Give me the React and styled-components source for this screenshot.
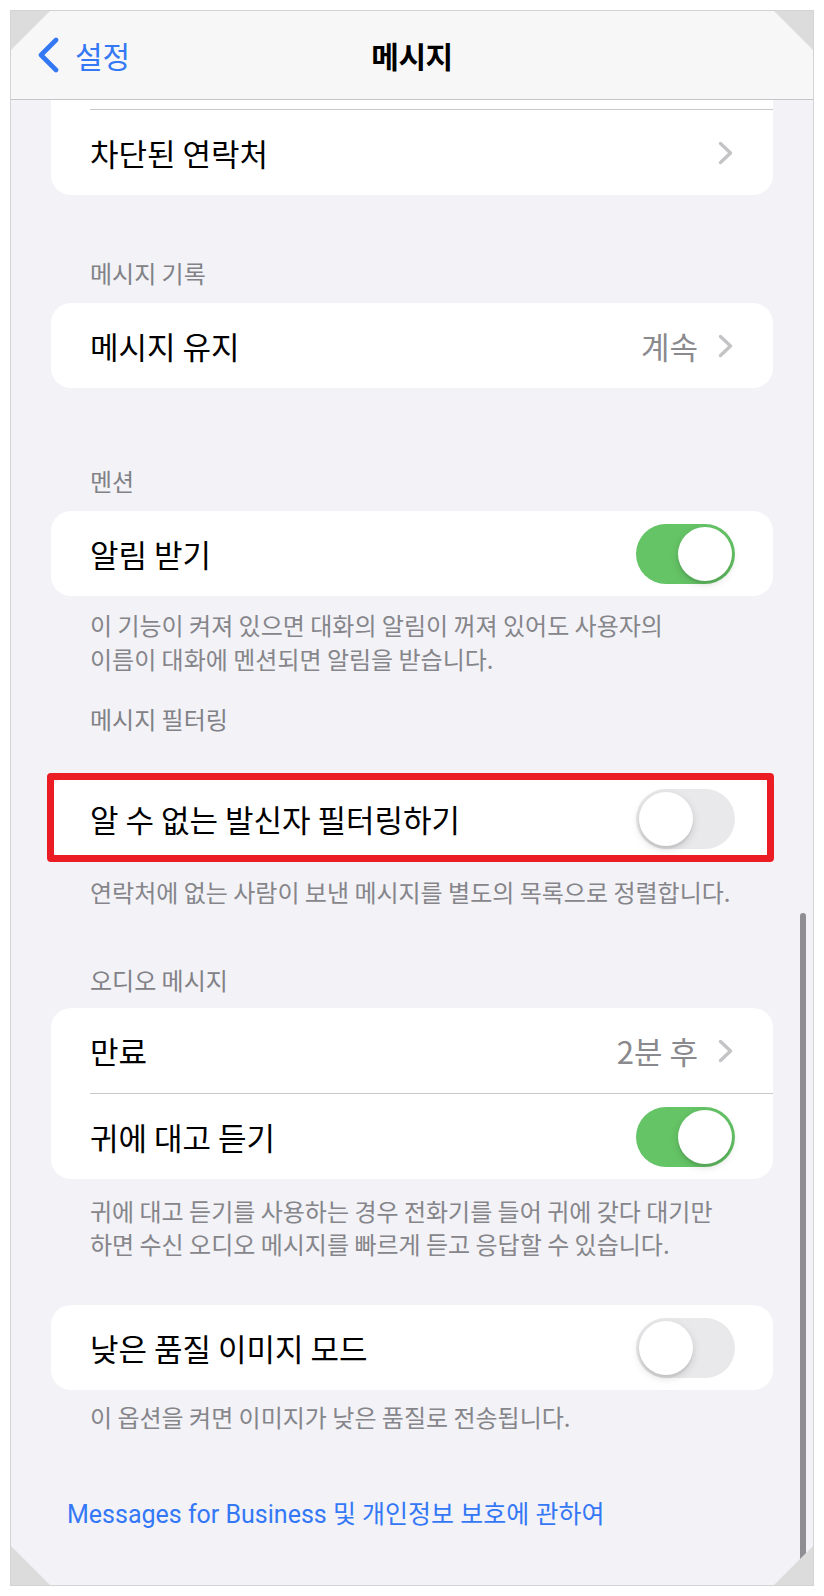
import React from "react";
import styled, { createGlobalStyle } from "styled-components";

const GlobalStyle = createGlobalStyle`
  html, body {
    margin: 0;
    padding: 0;
    background: #ffffff;
  }
  body {
    font-family: "Noto Sans CJK KR", "Noto Sans", sans-serif;
    -webkit-font-smoothing: antialiased;
  }
`;

const Page = styled.div`
  width: 824px;
  height: 1596px;
  box-sizing: border-box;
  padding: 10px;
`;

const Screen = styled.div`
  position: relative;
  width: 804px;
  height: 1576px;
  box-sizing: border-box;
  border: 1px solid #d4d4d6;
  background: #f2f2f7;
  display: flex;
  flex-direction: column;
  overflow: hidden;
`;

const NavBar = styled.header`
  flex: none;
  height: 89px;
  box-sizing: border-box;
  border-bottom: 1px solid #c4c4c6;
  background: #f7f7f7;
  display: grid;
  grid-template-columns: 1fr auto 1fr;
  align-items: center;
  padding: 0 26px;
`;

const BackButton = styled.div`
  display: flex;
  align-items: center;
  gap: 16px;
  color: #3478f6;
  font-size: 30px;
`;

const NavTitle = styled.div`
  font-size: 30px;
  font-weight: 700;
  letter-spacing: -0.5px;
  color: #000;
`;

const Content = styled.main`
  flex: 1;
  overflow: hidden;
  padding: 0 40px;
  display: flex;
  flex-direction: column;
  & > * {
    flex-shrink: 0;
  }
`;

const Card = styled.div`
  background: #ffffff;
  border-radius: 20px;
  overflow: hidden;
  margin-top: ${({ $mt }) => $mt || 0}px;
`;

const Row = styled.div`
  height: 85px;
  display: flex;
  align-items: center;
  justify-content: space-between;
  padding: 0 38px 0 39px;
  font-size: 31px;
  color: #000;
`;

const Divider = styled.div`
  height: 1px;
  margin-left: 39px;
  background: #c8c8cc;
`;

const Trailing = styled.div`
  display: flex;
  align-items: center;
  gap: 20px;
`;

const Value = styled.span`
  color: #8a8a8e;
`;

const ChevronIcon = styled.svg`
  display: block;
  margin-right: 2px;
`;

const SectionHeader = styled.div`
  font-size: 24px;
  line-height: 30px;
  color: #818186;
  padding-left: 39px;
  margin-top: ${({ $mt }) => $mt}px;
  margin-bottom: ${({ $mb }) => ($mb === undefined ? 15 : $mb)}px;
`;

const Footer = styled.div`
  font-size: 24px;
  line-height: ${({ $lh }) => $lh || 34}px;
  color: #85858a;
  padding: ${({ $pt }) => $pt}px 10px 0 39px;
  white-space: nowrap;
`;

const Track = styled.div`
  width: 99px;
  height: 60px;
  box-sizing: border-box;
  border-radius: 30px;
  padding: 3px;
  display: flex;
  justify-content: ${({ $on }) => ($on ? "flex-end" : "flex-start")};
  background: ${({ $on }) => ($on ? "#65c466" : "#e9e9eb")};
`;

const Knob = styled.div`
  width: 54px;
  height: 54px;
  border-radius: 50%;
  background: #ffffff;
  box-shadow: 0 3px 8px rgba(0, 0, 0, 0.15), 0 3px 1px rgba(0, 0, 0, 0.06);
`;

const Highlight = styled.div`
  position: relative;
  margin-top: ${({ $mt }) => $mt}px;
  &::after {
    content: "";
    position: absolute;
    top: -3px;
    right: -1px;
    bottom: -1px;
    left: -4px;
    border: 7px solid #ec1c24;
    border-radius: 4px;
    pointer-events: none;
  }
`;

const LinkText = styled.div`
  margin-top: 66px;
  padding-left: 16px;
  font-family: "Roboto", "Noto Sans CJK KR", sans-serif;
  font-size: 25px;
  line-height: 30px;
  color: #3478f6;
  white-space: nowrap;
`;

const Scrollbar = styled.div`
  position: absolute;
  left: 789px;
  top: 902px;
  width: 6px;
  height: 664px;
  border-radius: 3px;
  background: #8e8e93;
`;

const Corner = styled.div`
  position: absolute;
  width: 39px;
  height: 39px;
  background: #dcdcdc;
  ${({ $pos }) =>
    $pos === "tl"
      ? "top: 0; left: 0; clip-path: polygon(0 0, 100% 0, 0 100%);"
      : $pos === "tr"
      ? "top: 0; right: 0; clip-path: polygon(0 0, 100% 0, 100% 100%);"
      : $pos === "bl"
      ? "bottom: 0; left: 0; clip-path: polygon(0 0, 100% 100%, 0 100%);"
      : "bottom: 0; right: 0; clip-path: polygon(100% 0, 100% 100%, 0 100%);"}
`;

const Chevron = () => (
  <ChevronIcon width="15" height="24" viewBox="0 0 15 24">
    <polyline
      points="2.5,2.5 12.5,12 2.5,21.5"
      fill="none"
      stroke="#c4c4c7"
      strokeWidth="3.4"
      strokeLinecap="round"
      strokeLinejoin="round"
    />
  </ChevronIcon>
);

const BackChevron = () => (
  <svg width="22" height="36" viewBox="0 0 22 36">
    <polyline
      points="19,3 4,18 19,33"
      fill="none"
      stroke="#3478f6"
      strokeWidth="4.6"
      strokeLinecap="round"
      strokeLinejoin="round"
    />
  </svg>
);

const Toggle = ({ on }) => (
  <Track $on={on}>
    <Knob />
  </Track>
);

const App = () => {
  return (
    <Page>
      <GlobalStyle />
      <Screen>
        <NavBar>
          <BackButton>
            <BackChevron />
            설정
          </BackButton>
          <NavTitle>메시지</NavTitle>
          <div />
        </NavBar>

        <Content>
          <Card $mt={-76}>
            <Row aria-hidden="true" />
            <Divider />
            <Row>
              차단된 연락처
              <Chevron />
            </Row>
          </Card>

          <SectionHeader $mt={63}>메시지 기록</SectionHeader>
          <Card>
            <Row>
              메시지 유지
              <Trailing>
                <Value>계속</Value>
                <Chevron />
              </Trailing>
            </Row>
          </Card>

          <SectionHeader $mt={78}>멘션</SectionHeader>
          <Card>
            <Row>
              알림 받기
              <Toggle on />
            </Row>
          </Card>
          <Footer $pt={12}>
            이 기능이 켜져 있으면 대화의 알림이 꺼져 있어도 사용자의
            <br />
            이름이 대화에 멘션되면 알림을 받습니다.
          </Footer>

          <SectionHeader $mt={28} $mb={0}>
            메시지 필터링
          </SectionHeader>
          <Highlight $mt={42}>
            <Card>
              <Row>
                알 수 없는 발신자 필터링하기
                <Toggle on={false} />
              </Row>
            </Card>
          </Highlight>
          <Footer $pt={14}>
            연락처에 없는 사람이 보낸 메시지를 별도의 목록으로 정렬합니다.
          </Footer>

          <SectionHeader $mt={56} $mb={13}>
            오디오 메시지
          </SectionHeader>
          <Card>
            <Row>
              만료
              <Trailing>
                <Value>2분 후</Value>
                <Chevron />
              </Trailing>
            </Row>
            <Divider />
            <Row>
              귀에 대고 듣기
              <Toggle on />
            </Row>
          </Card>
          <Footer $pt={15} $lh={33}>
            귀에 대고 듣기를 사용하는 경우 전화기를 들어 귀에 갖다 대기만
            <br />
            하면 수신 오디오 메시지를 빠르게 듣고 응답할 수 있습니다.
          </Footer>

          <Card $mt={45}>
            <Row>
              낮은 품질 이미지 모드
              <Toggle on={false} />
            </Row>
          </Card>
          <Footer $pt={10}>이 옵션을 켜면 이미지가 낮은 품질로 전송됩니다.</Footer>

          <LinkText>Messages for Business 및 개인정보 보호에 관하여</LinkText>
        </Content>

        <Scrollbar />
        <Corner $pos="tl" />
        <Corner $pos="tr" />
        <Corner $pos="bl" />
        <Corner $pos="br" />
      </Screen>
    </Page>
  );
};

export default App;
